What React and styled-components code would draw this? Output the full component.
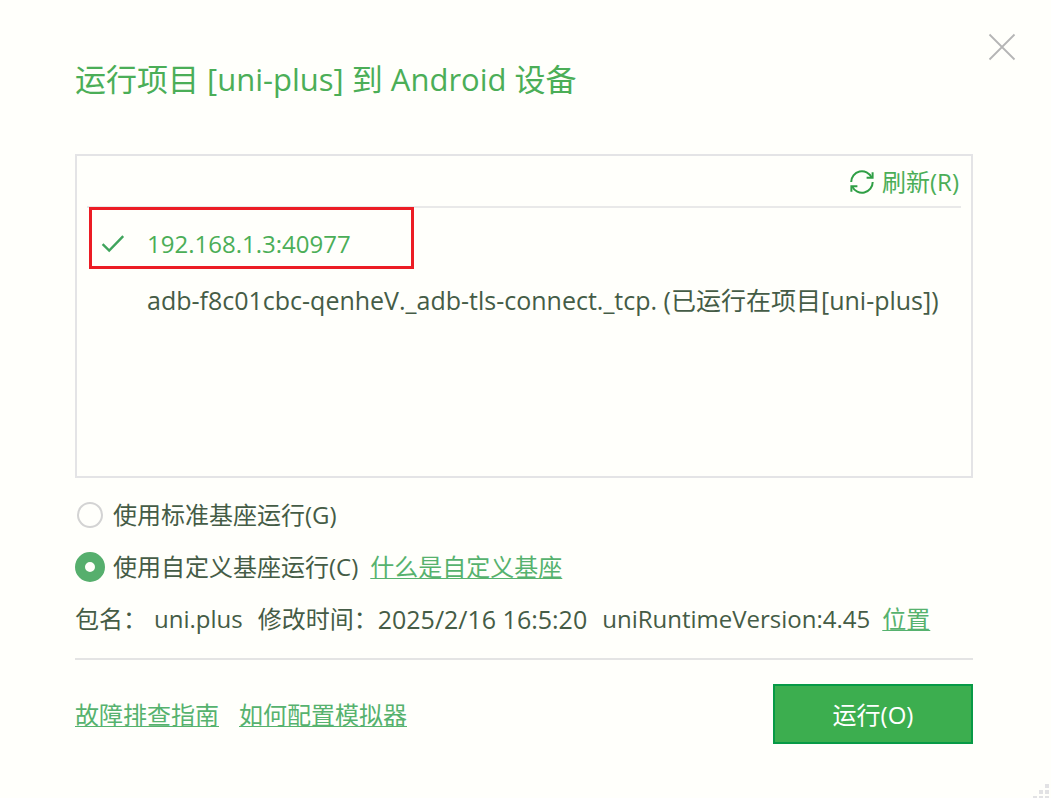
import React, { useState } from "react";
import styled, { createGlobalStyle } from "styled-components";

const GlobalStyle = createGlobalStyle`
  * { box-sizing: border-box; }
  body {
    margin: 0;
    background: #fffffb;
    color: #455c46;
    font: 24px/32px "Open Sans", "Noto Sans CJK SC", sans-serif;
  }
  button, input { font: inherit; margin: 0; }
`;

const Dialog = styled.main`
  position: relative;
  min-height: 100vh;
  padding: 56px 78px 54px 75px;
  background: #fffffb;
  overflow: hidden;
`;

const Title = styled.h1`
  margin: 0 0 52px;
  font-size: 31px;
  line-height: 46px;
  font-weight: 400;
  color: #4bae57;
`;

const CloseButton = styled.button`
  position: absolute;
  top: 32px;
  right: 34px;
  display: flex;
  padding: 0;
  border: 0;
  background: none;
  cursor: pointer;
`;

const DevicePanel = styled.section`
  min-height: 324px;
  padding: 0 10px 10px;
  border: 2px solid #e4e4e6;
`;

const Toolbar = styled.div`
  display: flex;
  justify-content: flex-end;
  height: 52px;
  padding: 2px 2px 0 0;
  border-bottom: 2px solid #e9e9e9;
`;

const RefreshButton = styled.button`
  display: flex;
  align-items: center;
  gap: 8px;
  padding: 0;
  border: 0;
  background: none;
  color: #4bae57;
  cursor: pointer;
`;

const DeviceList = styled.ul`
  margin: 0;
  padding: 8px 0 0;
  list-style: none;
`;

const DeviceItem = styled.li`
  position: relative;
`;

const DeviceButton = styled.button`
  display: grid;
  grid-template-columns: 32px 1fr;
  column-gap: 14px;
  align-items: center;
  width: 100%;
  height: 56px;
  padding: 0 0 0 14px;
  border: 0;
  background: none;
  color: ${(p) => (p.$selected ? "#4bae57" : "#455c46")};
  text-align: left;
  white-space: nowrap;
  cursor: pointer;
`;

const CheckSlot = styled.span`
  display: flex;
`;

const Text = styled.span`
  font-size: ${(p) => (p.$large ? 25 : 24)}px;
`;

const Highlight = styled.span`
  position: absolute;
  top: -9px;
  left: 2px;
  width: 325px;
  height: 62px;
  border: 3px solid #ec1c24;
  pointer-events: none;
`;

const Options = styled.div`
  display: flex;
  flex-direction: column;
  padding: 11px 0 13px;
`;

const Row = styled.div`
  display: flex;
  align-items: center;
  gap: ${(p) => p.$gap}px;
  height: 52px;
  white-space: nowrap;
`;

const RadioLabel = styled.label`
  display: flex;
  align-items: center;
  gap: 8px;
  cursor: pointer;
`;

const Radio = styled.input`
  appearance: none;
  width: 26px;
  height: 26px;
  margin: 2px;
  border: 2px solid #d3d3d3;
  border-radius: 50%;

  &:checked {
    width: 30px;
    height: 30px;
    margin: 0;
    border: 10px solid #56af6d;
    background: #fffffb;
  }
`;

const Field = styled.span`
  display: flex;
  gap: ${(p) => p.$gap}px;
`;

const Link = styled.a`
  color: #56b26e;
  text-decoration: underline;
  text-decoration-thickness: 1px;
  text-underline-offset: 2px;
  text-decoration-skip-ink: none;
`;

const Footer = styled.footer`
  display: flex;
  align-items: center;
  justify-content: space-between;
  padding-top: 24px;
  border-top: 2px solid #e4e4e4;
`;

const HelpLinks = styled.nav`
  display: flex;
  gap: 20px;
  padding-top: 2px;
`;

const RunButton = styled.button`
  width: 200px;
  height: 60px;
  padding: 2px 0 0;
  border: 2px solid #079a46;
  background: #3cae4f;
  color: #fff;
  cursor: pointer;
`;

const ResizeGrip = styled.svg`
  position: absolute;
  right: 2px;
  bottom: 0;
`;

const CloseIcon = () => (
  <svg width="30" height="30" viewBox="0 0 30 30" fill="none" stroke="#b5b5b5" strokeWidth="1.8" aria-hidden="true">
    <path d="M2.5 2.5 27.5 27.5M27.5 2.5 2.5 27.5" />
  </svg>
);

const RefreshIcon = () => (
  <svg width="24" height="24" viewBox="0 0 24 24" fill="none" stroke="#2f9f45" strokeWidth="2" aria-hidden="true">
    <path d="M1.2 12A10.7 10.7 0 0 1 21.6 7.4" />
    <path d="M22.6 2.2V7.8H16.6" />
    <path d="M22.7 12A10.7 10.7 0 0 1 2.3 16.6" />
    <path d="M1.4 21.8V16.2H7.4" />
  </svg>
);

const CheckIcon = () => (
  <svg width="24" height="24" viewBox="0 0 24 24" fill="none" stroke="#3fa45c" strokeWidth="2.4" aria-hidden="true">
    <path d="M1.6 12.2 8.2 18.6 22.2 4.2" />
  </svg>
);

const devices = [
  { id: "wifi", name: "192.168.1.3:40977", marked: true },
  { id: "adb", name: "adb-f8c01cbc-qenheV._adb-tls-connect._tcp. (已运行在项目[uni-plus])", large: true },
];

export default function App() {
  const [device, setDevice] = useState("wifi");
  const [base, setBase] = useState("custom");

  return (
    <Dialog>
      <GlobalStyle />
      <Title>运行项目 [uni-plus] 到 Android 设备</Title>
      <CloseButton type="button" aria-label="关闭">
        <CloseIcon />
      </CloseButton>

      <DevicePanel>
        <Toolbar>
          <RefreshButton type="button">
            <RefreshIcon />
            刷新(R)
          </RefreshButton>
        </Toolbar>
        <DeviceList>
          {devices.map((d) => (
            <DeviceItem key={d.id}>
              <DeviceButton type="button" $selected={device === d.id} onClick={() => setDevice(d.id)}>
                <CheckSlot>{device === d.id && <CheckIcon />}</CheckSlot>
                <Text $large={d.large}>{d.name}</Text>
              </DeviceButton>
              {d.marked && <Highlight />}
            </DeviceItem>
          ))}
        </DeviceList>
      </DevicePanel>

      <Options>
        <Row>
          <RadioLabel>
            <Radio type="radio" name="base" checked={base === "standard"} onChange={() => setBase("standard")} />
            使用标准基座运行(G)
          </RadioLabel>
        </Row>
        <Row $gap={12}>
          <RadioLabel>
            <Radio type="radio" name="base" checked={base === "custom"} onChange={() => setBase("custom")} />
            使用自定义基座运行(C)
          </RadioLabel>
          <Link href="#custom-base">什么是自定义基座</Link>
        </Row>
        <Row $gap={15}>
          <Field $gap={7}>
            <Text>包名：</Text>
            <Text>uni.plus</Text>
          </Field>
          <Field $gap={0}>
            <Text>修改时间：</Text>
            <Text $large>2025/2/16 16:5:20</Text>
          </Field>
          <Field $gap={12}>
            <Text>uniRuntimeVersion:4.45</Text>
            <Link href="#location">位置</Link>
          </Field>
        </Row>
      </Options>

      <Footer>
        <HelpLinks>
          <Link href="#troubleshooting">故障排查指南</Link>
          <Link href="#emulator">如何配置模拟器</Link>
        </HelpLinks>
        <RunButton type="button">运行(O)</RunButton>
      </Footer>

      <ResizeGrip width="16" height="14" viewBox="0 0 16 14" fill="#e2e2e4" aria-hidden="true">
        <path d="M12 0h4v4h-4zM6 6h4v4H6zM12 6h4v4h-4zM0 12h4v2H0zM6 12h4v2H6zM12 12h4v2h-4z" />
      </ResizeGrip>
    </Dialog>
  );
}
